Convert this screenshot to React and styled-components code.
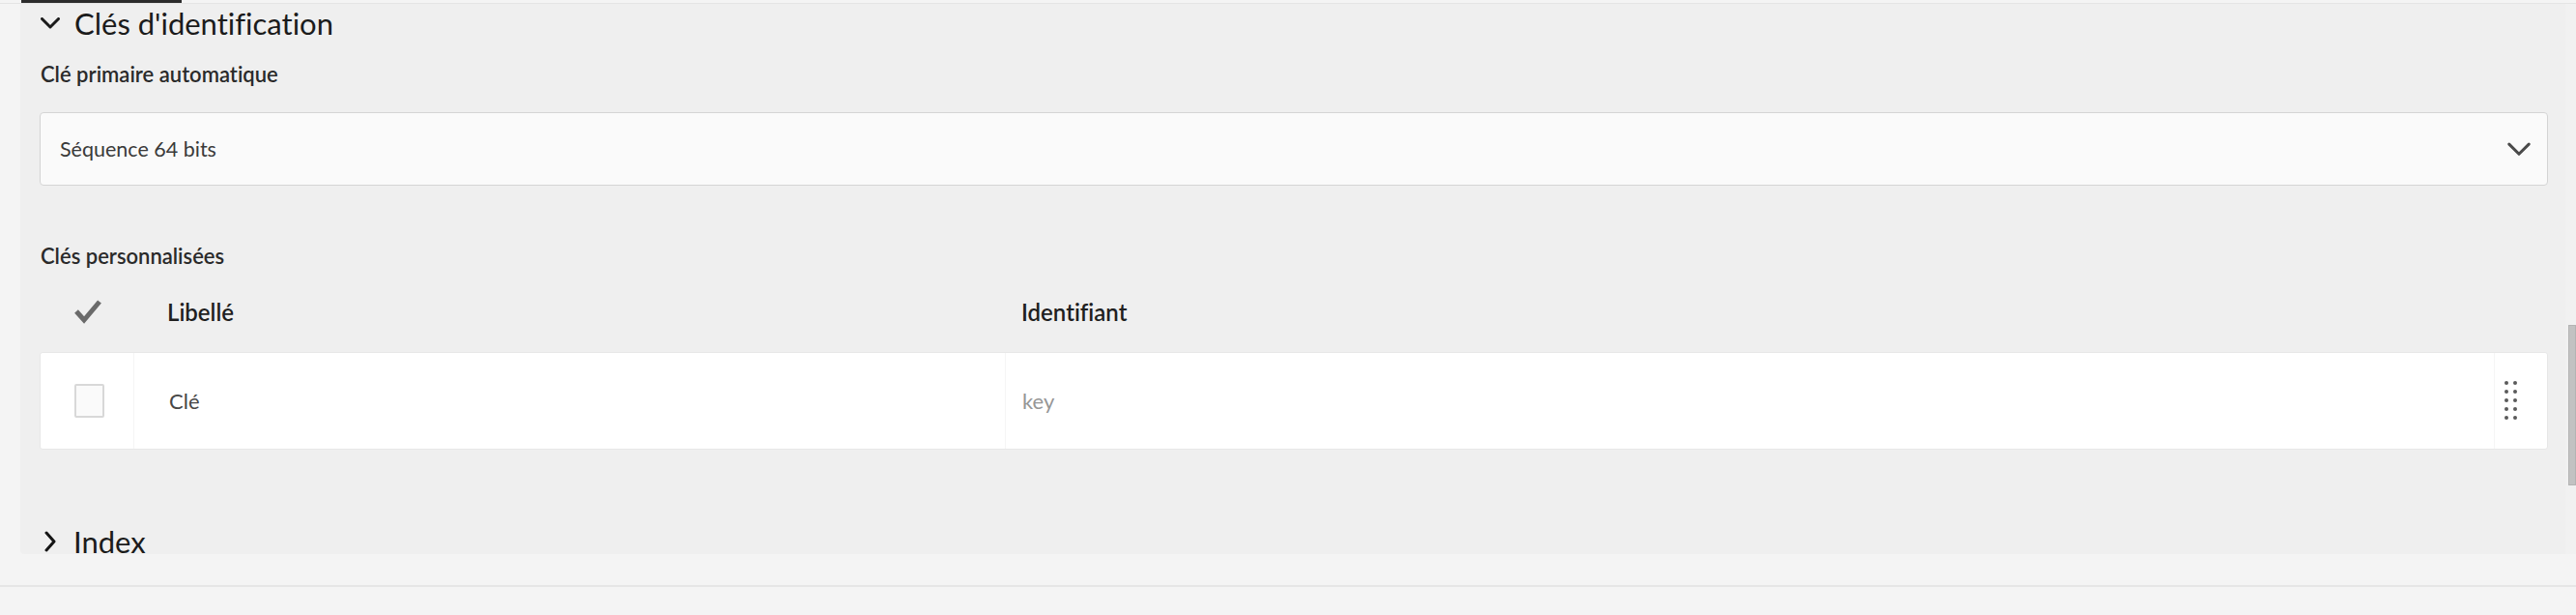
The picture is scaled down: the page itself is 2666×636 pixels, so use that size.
import React from "react";
import styled, { createGlobalStyle } from "styled-components";

const Global = createGlobalStyle`
  html, body { margin: 0; padding: 0; background: #f4f4f4; }
  body {
    font-family: Lato, "Liberation Sans", sans-serif;
    color: #222;
    font-variant-ligatures: none;
    font-feature-settings: "liga" 0, "clig" 0;
  }
  * { box-sizing: border-box; }
`;

const Page = styled.div`
  width: 2666px;
  height: 636px;
  display: flex;
  flex-direction: column;
  background: #f4f4f4;
  overflow: hidden;
`;

const TabStrip = styled.div`
  height: 4px;
  flex: none;
  padding-left: 22px;
  border-bottom: 1px solid #e4e4e4;
`;

const TabIndicator = styled.div`
  width: 166px;
  height: 3px;
  background: #2c2c2c;
`;

const Main = styled.div`
  display: flex;
  height: 569px;
  flex: none;
`;

const Gutter = styled.div`
  width: 21px;
  flex: none;
`;

const Panel = styled.div`
  flex: 1;
  background: #efefef;
  border-bottom-left-radius: 4px;
  overflow: hidden;
  padding: 0 18px 0 20px;
  display: flex;
  flex-direction: column;
`;

const ScrollTrack = styled.div`
  width: 11px;
  flex: none;
  background: #f1f1f1;
  padding: 332px 0 0 3px;
`;

const Thumb = styled.div`
  width: 8px;
  height: 166px;
  background: #c2c2c2;
  border: 1px solid #b4b4b4;
`;

const SectionHeader = styled.div`
  display: flex;
  align-items: center;
  gap: ${(p) => (p.$collapsed ? "18px" : "15px")};
  height: 40px;
  margin-top: ${(p) => p.$top || 0}px;
  padding-left: ${(p) => (p.$collapsed ? "5px" : "1px")};
  flex: none;
`;

const SectionTitle = styled.div`
  font-size: 31px;
  line-height: 40px;
  color: #1b1b1b;
  font-weight: 400;
`;

const FieldLabel = styled.div`
  font-size: 22px;
  line-height: 30px;
  font-weight: 600;
  color: #2a2a2a;
  margin-top: ${(p) => p.$top}px;
  padding-left: 1px;
  flex: none;
`;

const SelectBox = styled.div`
  margin-top: 24px;
  height: 76px;
  flex: none;
  display: flex;
  align-items: center;
  justify-content: space-between;
  padding: 0 17px 0 20px;
  background: #fafafa;
  border: 1px solid #d4d4d4;
  border-radius: 4px;
`;

const SelectValue = styled.span`
  font-size: 21.5px;
  color: #3a3a3a;
`;

const Table = styled.div`
  display: flex;
  flex-direction: column;
  flex: none;
`;

const cols = "96px 902px 1fr 55px";

const HeaderRow = styled.div`
  display: grid;
  grid-template-columns: ${cols};
  height: 84px;
  align-items: center;
`;

const HeadCell = styled.div`
  padding-left: ${(p) => p.$pad}px;
  font-size: 24px;
  font-weight: 600;
  color: #1f1f1f;
  display: flex;
  align-items: center;
`;

const DataRow = styled.div`
  display: grid;
  grid-template-columns: ${cols};
  height: 101px;
  background: #ffffff;
  border: 1px solid #e7e7e7;
  border-radius: 3px;
`;

const Cell = styled.div`
  display: flex;
  align-items: center;
  padding-left: ${(p) => p.$pad}px;
  font-size: 22px;
  color: ${(p) => (p.$muted ? "#969696" : "#474747")};
  border-left: ${(p) => (p.$first ? "none" : "1px solid #f5f5f5")};
`;

const Checkbox = styled.div`
  width: 31px;
  height: 35px;
  background: #fafafa;
  border: 2px solid #d8d8d8;
  border-radius: 2px;
`;

const DragHandle = styled.div`
  display: grid;
  grid-template-columns: repeat(2, 4px);
  grid-auto-rows: 4px;
  column-gap: 5px;
  row-gap: 5px;
  margin-top: -2px;
`;

const Dot = styled.span`
  width: 4px;
  height: 4px;
  border-radius: 50%;
  background: #5a5a5a;
`;

const Footer = styled.div`
  flex: 1;
  padding-top: 32px;
`;

const FooterLine = styled.div`
  height: 2px;
  background: #e6e6e6;
`;

const ChevronDown = ({ w = 20, h = 12, stroke = "#222", sw = 3 }) => (
  <svg width={w} height={h} viewBox="0 0 20 12" fill="none">
    <path d="M1.5 1.5 L10 10 L18.5 1.5" stroke={stroke} strokeWidth={sw} strokeLinecap="round" strokeLinejoin="round" />
  </svg>
);

const ChevronRight = () => (
  <svg width="12" height="22" viewBox="0 0 12 22" fill="none">
    <path d="M2 2 L10 11 L2 20" stroke="#151515" strokeWidth="3" strokeLinecap="round" strokeLinejoin="round" />
  </svg>
);

const Check = () => (
  <svg width="30" height="26" viewBox="0 0 30 26" fill="none">
    <path d="M3 13 L11 22 L27 3" stroke="#6a6a6a" strokeWidth="5" strokeLinecap="butt" strokeLinejoin="miter" />
  </svg>
);

export default function App() {
  return (
    <>
      <Global />
      <Page>
        <TabStrip>
          <TabIndicator />
        </TabStrip>
        <Main>
          <Gutter />
          <Panel>
            <SectionHeader>
              <ChevronDown w={20} h={12} stroke="#1b1b1b" sw={3} />
              <SectionTitle>Clés d'identification</SectionTitle>
            </SectionHeader>
            <FieldLabel $top={18}>Clé primaire automatique</FieldLabel>
            <SelectBox>
              <SelectValue>Séquence 64 bits</SelectValue>
              <ChevronDown w={24} h={15} stroke="#4a4a4a" sw={2.5} />
            </SelectBox>
            <FieldLabel $top={58}>Clés personnalisées</FieldLabel>
            <Table>
              <HeaderRow>
                <HeadCell $pad={35}>
                  <Check />
                </HeadCell>
                <HeadCell $pad={36}>Libellé</HeadCell>
                <HeadCell $pad={18}>Identifiant</HeadCell>
                <HeadCell $pad={0} />
              </HeaderRow>
              <DataRow>
                <Cell $first $pad={35}>
                  <Checkbox />
                </Cell>
                <Cell $pad={36}>Clé</Cell>
                <Cell $pad={17} $muted>key</Cell>
                <Cell $pad={10}>
                  <DragHandle>
                    {Array.from({ length: 10 }).map((_, i) => (
                      <Dot key={i} />
                    ))}
                  </DragHandle>
                </Cell>
              </DataRow>
            </Table>
            <SectionHeader $collapsed $top={75}>
              <ChevronRight />
              <SectionTitle>Index</SectionTitle>
            </SectionHeader>
          </Panel>
          <ScrollTrack>
            <Thumb />
          </ScrollTrack>
        </Main>
        <Footer>
          <FooterLine />
        </Footer>
      </Page>
    </>
  );
}
